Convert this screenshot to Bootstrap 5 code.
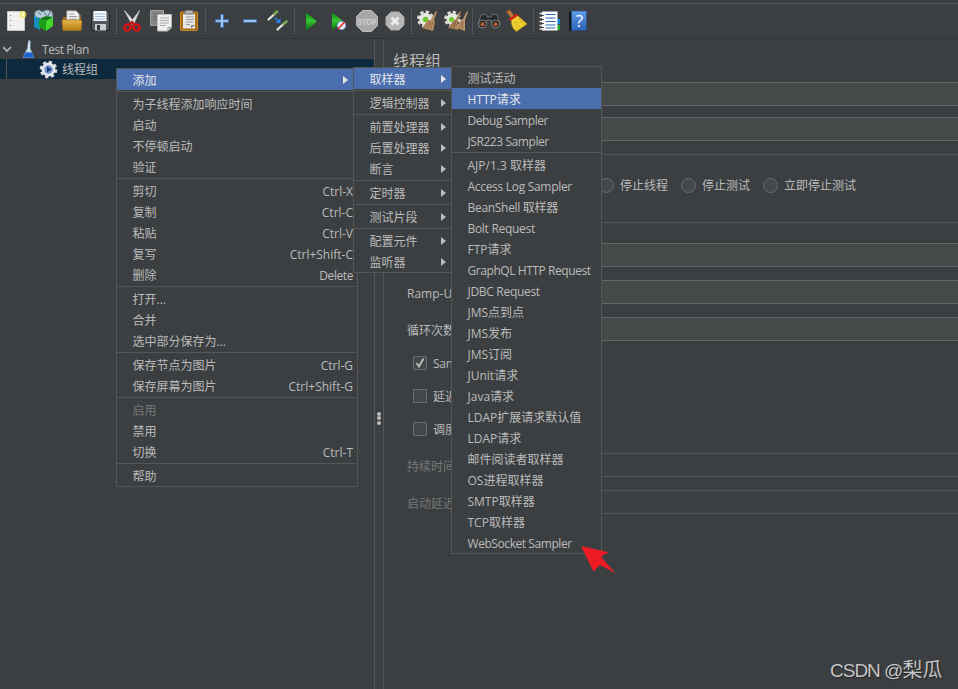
<!DOCTYPE html>
<html lang="zh-CN">
<head>
<meta charset="utf-8">
<meta name="viewport" content="width=device-width, initial-scale=1">
<title>JMeter</title>
<link href="https://cdn.jsdelivr.net/npm/bootstrap@5.3.0/dist/css/bootstrap.min.css" rel="stylesheet">
<style>
html, body { height: 100%; }
body { background: #3c3f41; color: #bbb; font: 12px/21px "Open Sans", "Noto Sans CJK SC", sans-serif; overflow: hidden; }
.topline { height: 4px; border-bottom: 1px solid #555; }
.toolbar { height: 35px; padding: 3px 0 3px 2px; border-bottom: 1px solid #323536; }
.toolbar svg { width: 28px; height: 28px; flex: none; }
.sep { width: 1px; height: 26px; margin: 0 2px; background: #555; flex: none; }
.tree { width: 374px; }
.tree-row { height: 20px; line-height: 20px; }
.tree-row > span { padding-top: 2px; }
.tree-row.sel { background: #0d293e; }
.chev { margin: 0 5px 0 3px; }
.gear { margin-left: 31px; }
.guide { width: 1px; height: 20px; margin-left: 6px; background: #555; }
.splitter { width: 10px; padding-top: 109px; border: 1px solid #555; border-width: 0 1px; }
.grip { width: 4px; height: 4px; border-radius: 50%; background: #bbb; margin-bottom: .5px; }
.props { padding-left: 9px; }
.props h1 { font: 16px/24px "Open Sans", "Noto Sans CJK SC", sans-serif; margin: 10px 0 9px; }
.form-control.fld, .form-control.fld:disabled { height: 24px; min-height: 0; padding: 0; border: 1px solid #646464; border-right: 0; border-radius: 0; background: #45494a; }
.form-control.fld:disabled { border-color: #555; background: #3c3f41; }
.gap11 { margin-bottom: 11px; }
.gap13 { margin-bottom: 13px; }
.sect { border-top: 1px solid #555; }
.thread-props { padding: 20px 0 0 14px; }
.lbl { width: 70px; flex: none; white-space: nowrap; padding-top: 2px; }
.radio-row { height: 68px; padding: 20px 0 0 206px; }
.ring { width: 15px; height: 15px; flex: none; border: 1px solid #6b6b6b; border-radius: 50%; background: #43494a; margin-right: 6px; }
.radio-item { height: 21px; width: 82px; flex: none; white-space: nowrap; }
.check-row { height: 21px; margin-bottom: 12px; padding-left: 6px; }
.check-row.last { margin-bottom: 14px; }
.check-row .txt { padding-top: 2px; }
.box { width: 14px; height: 14px; border: 1px solid #6b6b6b; border-radius: 1px; background: #43494a; margin-right: 6px; }
.dimmed { color: #777; }
.dropdown-menu.ctx { min-width: 0; margin: 0; padding: 0; border: 1px solid #555; border-radius: 0; background: #3c3f41; color: #bbb; font-size: 12px; }
.ctx .dropdown-item { display: flex; justify-content: space-between; align-items: center; height: 21px; line-height: 21px; padding: 2px 4px 0 15.500px; color: #bbb; }
.ctx .dropdown-item.active { background: #4b6eaf; color: #e4e6ea; }
.ctx .dropdown-item.disabled { color: #777; }
.ctx .dropdown-divider { height: 1px; margin: 1px 0; border: 0; background: #555; opacity: 1; }
.ctx .has-sub::after { content: ""; border-left: 5px solid currentColor; border-top: 4.500px solid transparent; border-bottom: 4.500px solid transparent; margin: 0 1px 2px 0; }
.menu-a { left: 116px; top: 68px; width: 242px; }
.menu-a .has-sub::after { margin-right: 5px; }
.menu-b { left: 353px; top: 67px; width: 99px; z-index: 1001; }
.menu-c { left: 451px; top: 66px; width: 151px; z-index: 1002; }
.latin { letter-spacing: -.3px; }
.latin-tight { letter-spacing: -.43px; }
.keys { letter-spacing: 0; }
.pointer { position: absolute; left: 580px; top: 545px; z-index: 1003; }
.watermark { position: absolute; left: 830px; top: 656px; font: 20px/28px "Liberation Sans", "Noto Sans CJK SC", sans-serif; color: #c4c5c6; text-shadow: 1px 1px 1px #222; white-space: nowrap; }
.watermark span { font-size: 19px; letter-spacing: -1px; }
</style>
</head>
<body class="d-flex flex-column position-relative">
<svg width="0" height="0" class="position-absolute">
  <defs>
    <linearGradient id="grn" x1="0" y1="0" x2="0" y2="1"><stop offset="0" stop-color="#0b8f0b"/><stop offset=".45" stop-color="#35c435"/><stop offset="1" stop-color="#057005"/></linearGradient>
    <linearGradient id="gold" x1="0" y1="0" x2="0" y2="1"><stop offset="0" stop-color="#e8b84a"/><stop offset="1" stop-color="#b27a14"/></linearGradient>
    <linearGradient id="blu" x1="0" y1="0" x2="0" y2="1"><stop offset="0" stop-color="#5f9de8"/><stop offset="1" stop-color="#2b62b8"/></linearGradient>
  </defs>
</svg>
<div class="topline flex-shrink-0"></div>
<div class="toolbar d-flex align-items-center flex-shrink-0">
  <!-- new -->
  <svg viewBox="0 0 28 28"><path d="M5.500 4.500h17v19h-17z" fill="#f1f1ef" stroke="#c9c9c4"/><path d="M8.500 8v14" stroke="#777" stroke-dasharray="1 4"/><circle cx="21" cy="7.500" r="3.500" fill="#efe45a" opacity=".75"/><circle cx="21" cy="7.500" r="1.500" fill="#fffbd0"/></svg>
  <!-- templates -->
  <svg viewBox="0 0 28 28"><path d="M5 5l4-2 3 2 5-2 5 2 1 7-12 4-6-5z" fill="#b8cdd8" stroke="#7d98a6"/><path d="M8 5l3 3M14 5l3 4M20 5l-2 4" stroke="#4f7185"/><path d="M4 9l6 2v12l-6-3z" fill="#168fc0"/><path d="M9 12l7 2v10l-7-4z" fill="#1b9f1b"/><path d="M16 14l7-4v9l-7 5z" fill="#42d829"/><path d="M9 12l7-3 7 1-7 4z" fill="#117a15"/></svg>
  <!-- open -->
  <svg viewBox="0 0 28 28"><path d="M5 10h5l1-2h12v15H5z" fill="#9c6d1c"/><path d="M9 4h9l3 3v10H9z" fill="#f3f3f3" stroke="#c0c0c0"/><path d="M11 7h5M11 9.500h8M11 12h8" stroke="#999"/><path d="M4 13h18l2 1-1 9.500H5z" fill="url(#gold)" stroke="#a8741c" stroke-width=".7"/></svg>
  <!-- save -->
  <svg viewBox="0 0 28 28"><path d="M5.500 4.500h17l1 2v17h-18z" fill="#52565a" stroke="#202426"/><path d="M7.500 4h13v10h-13z" fill="#f4f7fa"/><path d="M9 7h10M9 9.500h10M9 12h10" stroke="#9ebddd"/><path d="M9 17h11v6.500H9z" fill="#c9cdd0"/><path d="M11 18h3v5h-3z" fill="#33383b"/></svg>
  <div class="sep"></div>
  <!-- cut -->
  <svg viewBox="0 0 28 28"><path d="M5.500 3.500l7.500 14 3-2zM20.500 3.500l-9 12 3 2z" fill="#e2e4e4" stroke="#c5c7c7" stroke-width=".8"/><ellipse cx="8.500" cy="20.500" rx="3.300" ry="2.800" transform="rotate(-35 8.500 20.500)" fill="none" stroke="#d81313" stroke-width="2.500"/><ellipse cx="17.500" cy="20.500" rx="3.300" ry="2.800" transform="rotate(35 17.500 20.500)" fill="none" stroke="#d81313" stroke-width="2.500"/><path d="M10 18l3-3 3 3" fill="none" stroke="#c40f0f" stroke-width="2.200"/></svg>
  <!-- copy -->
  <svg viewBox="0 0 28 28"><path d="M3.500 3.500h13v15h-13z" fill="#858784" stroke="#a0a19e"/><path d="M6 7h8M6 10h8M6 13h6" stroke="#666"/><path d="M10.500 7.500h14v13l-3.500 3.500h-10.500z" fill="#eeeeec" stroke="#bbb"/><path d="M13 11h9M13 13.500h9M13 16h9M13 18.500h6" stroke="#aaa"/><path d="M21 24v-3.500h3.500" fill="#ccc" stroke="#999"/></svg>
  <!-- paste -->
  <svg viewBox="0 0 28 28"><rect x="5.500" y="5" width="17" height="18.500" rx="1" fill="#a86b12" stroke="#c98c27"/><path d="M8 7h12v14.500H8z" fill="#e9e9e7"/><path d="M10.500 3.500h7l1 3.500h-9z" fill="#b5b8b3" stroke="#777"/><path d="M11 10h8M11 12.500h8M11 15h7M11 17.500h4" stroke="#999"/><path d="M16 21.500v-3.500h4z" fill="#888"/></svg>
  <div class="sep"></div>
  <!-- expand, collapse, toggle -->
  <svg viewBox="0 0 28 28"><path d="M14 7v14M7 14h14" stroke="#3e74be" stroke-width="3.600"/><path d="M14 8v12M8 14h12" stroke="#b5d2f4" stroke-width="1.700"/></svg>
  <svg viewBox="0 0 28 28"><path d="M7 14h14" stroke="#3e74be" stroke-width="3.600"/><path d="M8 14h12" stroke="#b5d2f4" stroke-width="1.700"/></svg>
  <svg viewBox="0 0 28 28"><path d="M4.500 12.500l5.500-5M13.500 22.500l5.500-5" stroke="#e5e5df" stroke-width="2.300" stroke-linecap="round"/><path d="M10.500 7l2.500-2.200M19.500 17l3-2.500" stroke="#7cab58" stroke-width="2.700" stroke-linecap="round"/><path d="M10.500 10.500l4 3.500" stroke="#2682ef" stroke-width="1.400"/><path d="M16.500 11v5h-5z" fill="#2682ef"/></svg>
  <div class="sep"></div>
  <!-- run controls -->
  <svg viewBox="0 0 28 28"><path d="M9 5.500L20 14.500 9 23.500z" fill="url(#grn)"/></svg>
  <svg viewBox="0 0 28 28"><path d="M7 5.500L18 14 7 23.500z" fill="url(#grn)"/><circle cx="16.500" cy="18.500" r="4.300" fill="#e8edf6" stroke="#5f86c4"/><path d="M13 22l7-7.500" stroke="#d92a20" stroke-width="1.600"/></svg>
  <svg viewBox="0 0 28 28"><path d="M9.500 3.500h9l6 6v9l-6 6h-9l-6-6v-9z" fill="#a8a8a8" stroke="#bcbcbc"/><text x="14" y="17.500" text-anchor="middle" font-family="Liberation Sans, sans-serif" font-weight="700" font-size="9" textLength="19" lengthAdjust="spacingAndGlyphs" fill="#d2d2d2">STOP</text></svg>
  <svg viewBox="0 0 28 28"><path d="M10 5h8l5 5v8l-5 5h-8l-5-5v-8z" fill="#b7b7b7" stroke="#aaa" stroke-linejoin="round"/><path d="M10.500 10.500l7 7M17.500 10.500l-7 7" stroke="#eee" stroke-width="2.800"/></svg>
  <div class="sep"></div>
  <!-- clear, clear all -->
  <svg viewBox="0 0 28 28"><circle cx="11.500" cy="12" r="7.200" fill="none" stroke="#deded9" stroke-width="2.600" stroke-dasharray="3.400 2.250"/><circle cx="11.500" cy="12" r="6.300" fill="#e7e7e2"/><circle cx="11.500" cy="12.500" r="2.800" fill="#6ec62b"/><path d="M22 4l1 1-3 8 1 2-2 9-11-3 6-8 3 0z" fill="#b58b61"/><path d="M10 21l6-7M13 22l4-7M16 23l3-8" stroke="#806044" stroke-width=".8"/></svg>
  <svg viewBox="0 0 28 28"><circle cx="10.500" cy="12" r="7" fill="none" stroke="#deded9" stroke-width="2.600" stroke-dasharray="3.300 2.200"/><circle cx="10.500" cy="12" r="6" fill="#e7e7e2"/><circle cx="9.500" cy="12.500" r="2.500" fill="#6ec62b"/><path d="M18 4l1 1-3 8 0 10-10-2 6-8 2-1z" fill="#a98058"/><path d="M25 4l1 1-3 8 0 11-9-3 5-8 2-1z" fill="#bd946a"/><path d="M8 21l6-7M11 22l3-7M17 22l4-8M20 23l1-8" stroke="#806044" stroke-width=".8"/></svg>
  <div class="sep"></div>
  <!-- search, reset search -->
  <svg viewBox="0 0 28 28"><path d="M6 8l4-1 2 3h4l2-3 4 1 3 9h-8l-1-4h-4l-1 4H3z" fill="#25282a" stroke="#77797a" stroke-width=".8"/><circle cx="7.500" cy="17" r="4" fill="#16181a" stroke="#8b8b8b"/><circle cx="20.500" cy="17" r="4" fill="#16181a" stroke="#8b8b8b"/><circle cx="7.500" cy="17.200" r="2.200" fill="#a95f38"/><circle cx="20.500" cy="17.200" r="2.200" fill="#a95f38"/></svg>
  <svg viewBox="0 0 28 28"><path d="M3.500 4.500l3.500-1.500 4 6-3 2z" fill="#bd7a38" stroke="#8a531e" stroke-width=".6"/><path d="M8.500 12l6-3.500 9.500 8.500-10.500 7.500c-4-3-5.500-7-5-12.500z" fill="#f0d332" stroke="#b3920e" stroke-width=".7"/><path d="M11 14l4 9M13 14l5 8M15 11l6 7" stroke="#c09c12" stroke-width=".7"/><path d="M6.500 13l8-5.500" stroke="#d32616" stroke-width="2.600"/></svg>
  <div class="sep"></div>
  <!-- function helper, help -->
  <svg viewBox="0 0 28 28"><path d="M21 12h3v5h-3z" fill="#1680df"/><path d="M21 18h3v5h-3z" fill="#23a727"/><path d="M6 4.500h15.500v19H6z" fill="#fff"/><path d="M9.500 7.500h10M9.500 11h10M9.500 14.500h10M9.500 18h10M9.500 21h10" stroke="#2865c0" stroke-width="1.200"/><path d="M3.500 6.500h4M3.500 10.500h4M3.500 14.500h4M3.500 18.500h4M3.500 22h4" stroke="#e9e9e9" stroke-width="1.400"/><path d="M6 8.500h2M6 12.500h2M6 16.500h2M6 20.500h2" stroke="#444"/></svg>
  <svg viewBox="0 0 28 28"><path d="M5 5l3-1v20H5z" fill="#14181c"/><path d="M7.500 4h15v19.500h-15z" fill="url(#blu)" stroke="#274e8c" stroke-width=".6"/><text x="15.500" y="20" text-anchor="middle" font-family="Open Sans, sans-serif" font-size="17" fill="#fff">?</text></svg>
</div>

<div class="d-flex flex-grow-1">
  <div class="tree">
    <div class="tree-row d-flex align-items-center">
      <svg width="12" height="10" viewBox="0 0 12 10" class="chev"><path d="M0 3l4 4 4-4" fill="none" stroke="#b5b5b5" stroke-width="1.700"/></svg>
      <svg width="14" height="20" viewBox="0 0 14 20"><path d="M8.500 1.500l2 .5L10 9l4 9.500H3L7.500 9z" fill="#b9cfe4" stroke="#8faac4" stroke-width=".6"/><path d="M5.700 13.500h6.300l2 5H3z" fill="#1b62d2"/><path d="M9 4v8" stroke="#fff"/></svg>
      <span class="latin-tight ps-2">Test Plan</span>
    </div>
    <div class="tree-row sel d-flex align-items-center">
      <i class="guide"></i>
      <svg width="20" height="20" viewBox="0 0 20 20" class="gear"><circle cx="10.500" cy="10.500" r="7.500" fill="none" stroke="#d9dde2" stroke-width="2.600" stroke-dasharray="3.300 2.590"/><circle cx="10.500" cy="10.500" r="5.600" fill="#6f97cd" stroke="#e4e7eb" stroke-width="2.600"/><path d="M9 7.500l4.500 3-4.500 3z" fill="#17356d"/></svg>
      <span class="ps-1">线程组</span>
    </div>
  </div>
  <div class="splitter d-flex flex-column align-items-center justify-content-center">
    <div class="d-flex flex-column"><span class="grip"></span><span class="grip"></span><span class="grip"></span></div>
  </div>
  <div class="props flex-grow-1">
    <h1>线程组</h1>
    <input class="form-control fld gap11" aria-label="名称">
    <input class="form-control fld gap13" aria-label="注释">
    <div class="sect radio-row d-flex">
      <div class="radio-item d-flex align-items-center"><span class="ring"></span>停止线程</div>
      <div class="radio-item d-flex align-items-center"><span class="ring"></span>停止测试</div>
      <div class="radio-item d-flex align-items-center"><span class="ring"></span>立即停止测试</div>
    </div>
    <div class="sect thread-props">
      <div class="d-flex gap13"><span class="lbl"></span><input class="form-control fld" aria-label="线程数"></div>
      <div class="d-flex align-items-center gap13"><span class="lbl">Ramp-Up</span><input class="form-control fld" aria-label="Ramp-Up"></div>
      <div class="d-flex align-items-center gap11"><span class="lbl">循环次数</span><input class="form-control fld" aria-label="循环次数"></div>
      <div class="check-row d-flex align-items-center"><span class="box d-flex"><svg width="12" height="12" viewBox="0 0 12 12"><path d="M2.500 6l2.500 3.500 4.500-8" fill="none" stroke="#bbb" stroke-width="1.900"/></svg></span><span class="txt latin">Same</span></div>
      <div class="check-row d-flex align-items-center"><span class="box"></span><span class="txt">延迟</span></div>
      <div class="check-row last d-flex align-items-center"><span class="box"></span><span class="txt">调度</span></div>
      <div class="d-flex align-items-center gap13 dimmed"><span class="lbl">持续时间</span><input class="form-control fld" disabled aria-label="持续时间"></div>
      <div class="d-flex align-items-center dimmed"><span class="lbl">启动延迟</span><input class="form-control fld" disabled aria-label="启动延迟"></div>
    </div>
  </div>
</div>

<div class="dropdown-menu show ctx menu-a">
  <a class="dropdown-item active has-sub">添加</a>
  <hr class="dropdown-divider">
  <a class="dropdown-item">为子线程添加响应时间</a>
  <a class="dropdown-item">启动</a>
  <a class="dropdown-item">不停顿启动</a>
  <a class="dropdown-item">验证</a>
  <hr class="dropdown-divider">
  <a class="dropdown-item">剪切<span class="keys">Ctrl-X</span></a>
  <a class="dropdown-item">复制<span class="keys">Ctrl-C</span></a>
  <a class="dropdown-item">粘贴<span class="keys">Ctrl-V</span></a>
  <a class="dropdown-item">复写<span class="keys">Ctrl+Shift-C</span></a>
  <a class="dropdown-item">删除<span class="latin-tight">Delete</span></a>
  <hr class="dropdown-divider">
  <a class="dropdown-item">打开...</a>
  <a class="dropdown-item">合并</a>
  <a class="dropdown-item">选中部分保存为...</a>
  <hr class="dropdown-divider">
  <a class="dropdown-item">保存节点为图片<span class="keys">Ctrl-G</span></a>
  <a class="dropdown-item">保存屏幕为图片<span class="keys">Ctrl+Shift-G</span></a>
  <hr class="dropdown-divider">
  <a class="dropdown-item disabled">启用</a>
  <a class="dropdown-item">禁用</a>
  <a class="dropdown-item">切换<span class="keys">Ctrl-T</span></a>
  <hr class="dropdown-divider">
  <a class="dropdown-item">帮助</a>
</div>

<div class="dropdown-menu show ctx menu-b">
  <a class="dropdown-item active has-sub">取样器</a>
  <hr class="dropdown-divider">
  <a class="dropdown-item has-sub">逻辑控制器</a>
  <hr class="dropdown-divider">
  <a class="dropdown-item has-sub">前置处理器</a>
  <a class="dropdown-item has-sub">后置处理器</a>
  <a class="dropdown-item has-sub">断言</a>
  <hr class="dropdown-divider">
  <a class="dropdown-item has-sub">定时器</a>
  <hr class="dropdown-divider">
  <a class="dropdown-item has-sub">测试片段</a>
  <hr class="dropdown-divider">
  <a class="dropdown-item has-sub">配置元件</a>
  <a class="dropdown-item has-sub">监听器</a>
</div>

<div class="dropdown-menu show ctx menu-c">
  <a class="dropdown-item">测试活动</a>
  <a class="dropdown-item active">HTTP请求</a>
  <a class="dropdown-item latin-tight">Debug Sampler</a>
  <a class="dropdown-item latin-tight">JSR223 Sampler</a>
  <hr class="dropdown-divider">
  <a class="dropdown-item">AJP/1.3 取样器</a>
  <a class="dropdown-item latin">Access Log Sampler</a>
  <a class="dropdown-item latin">BeanShell 取样器</a>
  <a class="dropdown-item latin">Bolt Request</a>
  <a class="dropdown-item">FTP请求</a>
  <a class="dropdown-item latin-tight">GraphQL HTTP Request</a>
  <a class="dropdown-item latin">JDBC Request</a>
  <a class="dropdown-item">JMS点到点</a>
  <a class="dropdown-item">JMS发布</a>
  <a class="dropdown-item">JMS订阅</a>
  <a class="dropdown-item">JUnit请求</a>
  <a class="dropdown-item">Java请求</a>
  <a class="dropdown-item">LDAP扩展请求默认值</a>
  <a class="dropdown-item">LDAP请求</a>
  <a class="dropdown-item">邮件阅读者取样器</a>
  <a class="dropdown-item">OS进程取样器</a>
  <a class="dropdown-item">SMTP取样器</a>
  <a class="dropdown-item">TCP取样器</a>
  <a class="dropdown-item latin-tight">WebSocket Sampler</a>
</div>

<svg class="pointer" width="38" height="30" viewBox="0 0 38 30"><path d="M1 1L28.700 7.200 21 11.700 35.300 28 20 20 13.500 26.500z" fill="#ed1c24"/></svg>
<div class="watermark"><span>CSDN @</span>梨瓜</div>
<script src="https://cdn.jsdelivr.net/npm/bootstrap@5.3.0/dist/js/bootstrap.bundle.min.js"></script>
</body>
</html>
